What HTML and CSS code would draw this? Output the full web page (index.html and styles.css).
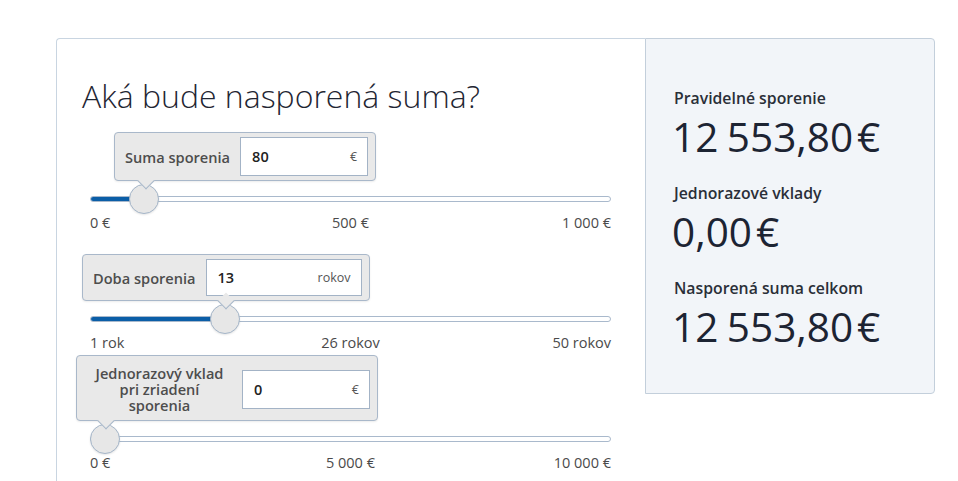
FILE: index.html
```html
<!DOCTYPE html>
<html lang="sk">
<head>
  <meta charset="UTF-8">
  <meta name="viewport" content="width=device-width, initial-scale=1.0">
  <title>Sporiaca kalkulačka</title>
  <link rel="stylesheet" href="styles.css">
</head>
<body>
  <div class="calc">
    <div class="calc-form">
      <h1>Aká bude nasporená suma?</h1>

      <div class="slider" style="--p: 0.08">
        <div class="tip" style="left: 24px">
          <span class="tip-label">Suma sporenia</span>
          <div class="field field-short">
            <span class="field-value">80</span>
            <span class="field-unit">€</span>
          </div>
          <span class="tip-arrow" style="left: 31px"></span>
        </div>
        <div class="track-wrap">
          <div class="track"><div class="fill"></div></div>
          <div class="thumb"></div>
        </div>
        <div class="scale">
          <span>0 €</span>
          <span>500 €</span>
          <span>1 000 €</span>
        </div>
      </div>

      <div class="slider" style="--p: 0.2449">
        <div class="tip" style="left: -8px">
          <span class="tip-label">Doba sporenia</span>
          <div class="field field-long">
            <span class="field-value">13</span>
            <span class="field-unit">rokov</span>
          </div>
          <span class="tip-arrow" style="left: 143px"></span>
        </div>
        <div class="track-wrap">
          <div class="track"><div class="fill"></div></div>
          <div class="thumb"></div>
        </div>
        <div class="scale">
          <span>1 rok</span>
          <span>26 rokov</span>
          <span>50 rokov</span>
        </div>
      </div>

      <div class="slider" style="--p: 0">
        <div class="tip tip-tall" style="left: -14px">
          <span class="tip-label tip-label-wrap">Jednorazový vklad pri zriadení sporenia</span>
          <div class="field field-short">
            <span class="field-value">0</span>
            <span class="field-unit">€</span>
          </div>
          <span class="tip-arrow" style="left: 29px"></span>
        </div>
        <div class="track-wrap">
          <div class="track"><div class="fill"></div></div>
          <div class="thumb"></div>
        </div>
        <div class="scale">
          <span>0 €</span>
          <span>5 000 €</span>
          <span>10 000 €</span>
        </div>
      </div>
    </div>

    <div class="calc-result">
      <div class="result-item">
        <div class="result-label">Pravidelné sporenie</div>
        <div class="result-value">12 553,80<span class="cur">€</span></div>
      </div>
      <div class="result-item">
        <div class="result-label">Jednorazové vklady</div>
        <div class="result-value">0,00<span class="cur">€</span></div>
      </div>
      <div class="result-item">
        <div class="result-label">Nasporená suma celkom</div>
        <div class="result-value">12 553,80<span class="cur">€</span></div>
      </div>
    </div>
  </div>
</body>
</html>
```

FILE: styles.css
```css
* {
  margin: 0;
  padding: 0;
  box-sizing: border-box;
}

body {
  font-family: "Open Sans", "DejaVu Sans", sans-serif;
  background: #fff;
  color: #1f2633;
  padding: 38px 0 0 56px;
  overflow: hidden;
}

.calc {
  display: flex;
  align-items: flex-start;
}

.calc-form {
  width: 589px;
  min-height: 520px;
  border-top: 1px solid #c9d5e1;
  border-left: 1px solid #c9d5e1;
  border-top-left-radius: 4px;
}

h1 {
  font-size: 32px;
  font-weight: 300;
  line-height: 40px;
  color: #1f2633;
  margin: 37px 0 16px 25px;
}

/* slider */
.slider {
  position: relative;
  width: 521px;
  height: 100px;
  margin: 0 0 20px 33px;
  padding-top: 52px;
}

.tip {
  position: absolute;
  bottom: 51px;
  z-index: 2;
  display: flex;
  align-items: center;
  gap: 10px;
  padding: 4px 7px 4px 10px;
  background: #e9e9e9;
  border: 1px solid #a9b8ca;
  border-radius: 4px;
  box-shadow: 0 1px 2px rgba(0, 0, 0, 0.08);
}

.tip-tall {
  padding: 9px 7px 7px 10px;
}

.tip-label {
  font-size: 14.6px;
  font-weight: 600;
  color: #4d4d4d;
  white-space: nowrap;
}

.tip-label-wrap {
  width: 145px;
  white-space: normal;
  text-align: center;
  line-height: 16px;
  padding: 0 5px;
}

.tip-arrow {
  position: absolute;
  bottom: -7px;
  width: 12px;
  height: 12px;
  margin-left: -6px;
  background: #e9e9e9;
  border-right: 1px solid #a9b8ca;
  border-bottom: 1px solid #a9b8ca;
  transform: rotate(45deg);
}

.field {
  display: flex;
  align-items: center;
  justify-content: space-between;
  height: 39px;
  padding: 0 10px 0 11px;
  background: #fff;
  border: 1px solid #a3b3c6;
}

.field-short {
  width: 128px;
}

.field-long {
  width: 156px;
  height: 37px;
}

.field-value {
  font-size: 14.5px;
  font-weight: 600;
  color: #222;
}

.field-unit {
  font-size: 12.5px;
  color: #555;
}

.track-wrap {
  position: relative;
  height: 30px;
}

.track {
  position: absolute;
  left: 0;
  right: 0;
  top: 12px;
  height: 6px;
  background: #fff;
  border: 1px solid #a9b9cc;
  border-radius: 3px;
  overflow: hidden;
}

.fill {
  height: 100%;
  width: calc(var(--p) * (100% - 30px) + 15px);
  background: #0b5ea7;
}

.thumb {
  position: absolute;
  top: 0;
  left: calc(var(--p) * (100% - 30px));
  width: 30px;
  height: 30px;
  border-radius: 50%;
  background: #e7e7e7;
  border: 1px solid #a5b6c9;
  box-shadow: 0 1px 2px rgba(0, 0, 0, 0.1);
}

.scale {
  display: grid;
  grid-template-columns: repeat(3, 1fr);
  font-size: 14.5px;
  line-height: 18px;
  color: #4a4a4a;
}

.scale span:nth-child(2) {
  text-align: center;
}

.scale span:last-child {
  text-align: right;
}

/* results */
.calc-result {
  width: 290px;
  background: #f2f5f9;
  border: 1px solid #c3cfdb;
  border-radius: 0 4px 4px 0;
  padding: 49px 20px 42px 28px;
}

.result-item + .result-item {
  margin-top: 22px;
}

.result-label {
  font-size: 15.8px;
  font-weight: 600;
  line-height: 20px;
  color: #2a2f38;
}

.result-value {
  font-size: 40.5px;
  line-height: 48px;
  margin-top: 5px;
  margin-left: -2px;
  color: #1d2433;
  word-spacing: -2px;
  white-space: nowrap;
}

.cur {
  margin-left: 4px;
}
```
